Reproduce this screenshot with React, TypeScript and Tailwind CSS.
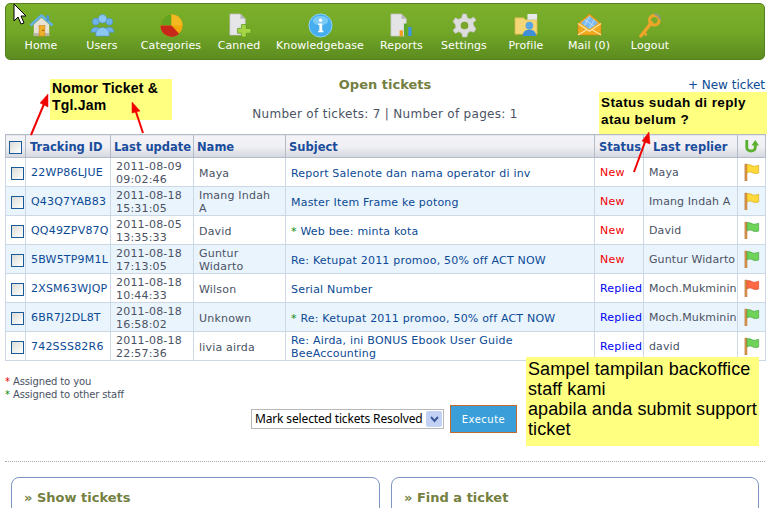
const navFont = { fontFamily: '"DejaVu Sans", sans-serif' };

function HomeIcon() {
  return (
    <svg width="25" height="25" viewBox="0 0 26 26">
      <path d="M5 12 L13 5 L21 12 V24 H5 Z" fill="#e8e2d6" />
      <path d="M5 24 H21 V21 H5 Z" fill="#b9b2a6" />
      <path d="M1.5 13 L13 2.5 L24.5 13" fill="none" stroke="#63b1e8" strokeWidth="2.6" strokeLinejoin="round" />
      <rect x="18" y="2.5" width="3" height="6" fill="#4d97d2" />
      <rect x="10.5" y="13" width="6" height="11" fill="#f0b12a" stroke="#c9821a" strokeWidth="0.6" />
      <circle cx="14.7" cy="18" r="0.9" fill="#9a5c10" />
    </svg>
  );
}

function UsersIcon() {
  return (
    <svg width="25" height="25" viewBox="0 0 26 26">
      <g fill="#6fb2ea" stroke="#4a90d0" strokeWidth="0.6">
        <circle cx="6" cy="9" r="3.6" />
        <circle cx="20" cy="9" r="3.6" />
        <path d="M1 20 C1 13 11 13 11 20 Z" />
        <path d="M15 20 C15 13 25 13 25 20 Z" />
        <circle cx="13" cy="6" r="4.4" fill="#8cc6f2" />
        <path d="M6 24 C5 12 21 12 20 24 Z" fill="#8cc6f2" />
      </g>
    </svg>
  );
}

function PieIcon() {
  return (
    <svg width="25" height="25" viewBox="0 0 26 26">
      <circle cx="13" cy="13" r="11.5" fill="#f0a80c" />
      <path d="M13 13 L13 1.5 A11.5 11.5 0 0 0 1.5 13 Z" fill="#63a51e" />
      <path d="M13 13 L1.5 13 A11.5 11.5 0 0 0 21 21.5 Z" fill="#c8281a" />
      <path d="M13 1.5 A11.5 11.5 0 0 1 24.5 13 L13 13 Z" fill="#f4b820" />
    </svg>
  );
}

function CannedIcon() {
  return (
    <svg width="25" height="25" viewBox="0 0 26 26">
      <path d="M3 1 H14 L19 6 V23 H3 Z" fill="#e6e6e8" stroke="#bdbdc2" strokeWidth="0.7" />
      <path d="M14 1 V6 H19 Z" fill="#b5b5ba" />
      <path d="M15 12 H20 V16 H25 V21 H20 V25 H15 V21 H11 V16 H15 Z" fill="#a5d544" stroke="#5e9a20" strokeWidth="0.8" />
    </svg>
  );
}

function InfoIcon() {
  return (
    <svg width="25" height="25" viewBox="0 0 26 26">
      <circle cx="13" cy="13" r="12" fill="#46aeef" stroke="#8fd2f8" strokeWidth="1" />
      <ellipse cx="13" cy="8" rx="8" ry="5" fill="#9ddcfb" opacity="0.6" />
      <circle cx="13" cy="7.5" r="1.8" fill="#fff" />
      <path d="M10.5 11 H14.8 V18.5 H16 V20 H10.5 V18.5 H11.8 V12.5 H10.5 Z" fill="#fff" />
    </svg>
  );
}

function ReportsIcon() {
  return (
    <svg width="25" height="25" viewBox="0 0 26 26">
      <path d="M2 1 H13 L18 6 V24 H2 Z" fill="#e4e4e6" stroke="#c0c0c4" strokeWidth="0.7" />
      <path d="M13 1 V6 H18 Z" fill="#b5b5ba" />
      <rect x="11" y="18" width="3.5" height="6" fill="#f0a020" />
      <rect x="15.5" y="11" width="3.5" height="13" fill="#58a82c" />
      <rect x="20" y="14.5" width="3.5" height="9.5" fill="#3d94e0" />
    </svg>
  );
}

function GearIcon() {
  return (
    <svg width="25" height="25" viewBox="0 0 26 26">
      <path
        d="M11 1 H15 L16 5 L19 6.3 L22.5 4.2 L25 7.5 L22 10.2 L22.6 13 L25 16.5 L22.8 20 L19 19 L16.5 21 L15.5 25 H11 L10 21 L7 19.5 L3.5 21.2 L1 18 L3.8 15 L3.4 12 L1 9 L3.4 5 L7 6.6 L10 5 Z"
        fill="#dcdcdc"
        stroke="#bdbdbd"
        strokeWidth="0.6"
      />
      <circle cx="13" cy="13" r="4" fill="#7ba52b" />
    </svg>
  );
}

function ProfileIcon() {
  return (
    <svg width="25" height="25" viewBox="0 0 26 26">
      <path d="M1 5 H10 L12 7 H24 V22 H1 Z" fill="#f3d675" stroke="#d8b24e" strokeWidth="0.7" />
      <path d="M14 1 H24 V7 H14 Z" fill="#e8e8e8" />
      <circle cx="16" cy="13" r="4" fill="#5aa5e3" />
      <path d="M9 24 C9 15 23 15 23 24 Z" fill="#3f8ed8" />
    </svg>
  );
}

function MailIcon() {
  return (
    <svg width="25" height="25" viewBox="0 0 26 26">
      <path d="M13 1 L25 11 V23 H1 V11 Z" fill="#f0a81e" stroke="#c87f10" strokeWidth="0.6" />
      <path d="M13 3 L22 10.5 L13 17 L4 10.5 Z" fill="#7ab9f0" />
      <path d="M8 7 L18 14 M13 3.5 L8 13 M18 7 L13 16" stroke="#c3e0f8" strokeWidth="1" />
      <path d="M1 11 L13 19 L25 11 M1 23 L11 17 M25 23 L15 17" fill="none" stroke="#ffe7a0" strokeWidth="1.2" />
    </svg>
  );
}

function KeyIcon() {
  return (
    <svg width="25" height="25" viewBox="0 0 26 26">
      <path d="M3 24 L14 10" stroke="#eea52a" strokeWidth="3.4" strokeLinecap="round" />
      <path d="M5.5 20 L9 23" stroke="#eea52a" strokeWidth="2.4" />
      <circle cx="17" cy="7.5" r="5" fill="none" stroke="#eea52a" strokeWidth="3.2" />
      <path d="M17 1 A7 7 0 0 1 23 7" fill="none" stroke="#8a9a80" strokeWidth="2" />
    </svg>
  );
}

const navItems = [
  { label: "Home", width: "w-[60px]", icon: <HomeIcon /> },
  { label: "Users", width: "w-[62px]", icon: <UsersIcon /> },
  { label: "Categories", width: "w-[76px]", icon: <PieIcon /> },
  { label: "Canned", width: "w-[60px]", icon: <CannedIcon /> },
  { label: "Knowledgebase", width: "w-[102px]", icon: <InfoIcon /> },
  { label: "Reports", width: "w-[61px]", icon: <ReportsIcon /> },
  { label: "Settings", width: "w-[64px]", icon: <GearIcon /> },
  { label: "Profile", width: "w-[60px]", icon: <ProfileIcon /> },
  { label: "Mail (0)", width: "w-[66px]", icon: <MailIcon /> },
  { label: "Logout", width: "w-[56px]", icon: <KeyIcon /> },
];

const tickets = [
  { id: "22WP86LJUE", date: "2011-08-09", time: "09:02:46", name: "Maya", subject: "Report Salenote dan nama operator di inv", star: false, status: "New", replier: "Maya", flag: "yellow" },
  { id: "Q43Q7YAB83", date: "2011-08-18", time: "15:31:05", name: "Imang Indah A", subject: "Master Item Frame ke potong", star: false, status: "New", replier: "Imang Indah A", flag: "yellow" },
  { id: "QQ49ZPV87Q", date: "2011-08-05", time: "13:35:33", name: "David", subject: "Web bee: minta kota", star: true, status: "New", replier: "David", flag: "green" },
  { id: "5BW5TP9M1L", date: "2011-08-18", time: "17:13:05", name: "Guntur Widarto", subject: "Re: Ketupat 2011 promoo, 50% off ACT NOW", star: false, status: "New", replier: "Guntur Widarto", flag: "green" },
  { id: "2XSM63WJQP", date: "2011-08-18", time: "10:44:33", name: "Wilson", subject: "Serial Number", star: false, status: "Replied", replier: "Moch.Mukminin", flag: "red" },
  { id: "6BR7J2DL8T", date: "2011-08-18", time: "16:58:02", name: "Unknown", subject: "Re: Ketupat 2011 promoo, 50% off ACT NOW", star: true, status: "Replied", replier: "Moch.Mukminin", flag: "green" },
  { id: "742SSS82R6", date: "2011-08-18", time: "22:57:36", name: "livia airda", subject: "Re: Airda, ini BONUS Ebook User Guide BeeAccounting", star: false, status: "Replied", replier: "david", flag: "green" },
];

const flagColors: Record<string, string[]> = {
  yellow: ["#ffd83a", "#d9a514"],
  green: ["#6fd35a", "#3d9f38"],
  red: ["#ff6a45", "#d9482a"],
};

function Flag({ color }: { color: string }) {
  const [fill, edge] = flagColors[color];
  return (
    <svg width="16" height="18" viewBox="0 0 18 20" className="block">
      <rect x="1" y="1" width="2.4" height="19" fill="#d8924a" stroke="#a8682c" strokeWidth="0.4" />
      <path d="M3.4 2 C7 0.5 9 4 12 3.5 C14 3.2 15.5 2.6 16.5 2.4 V11 C14 12 12 12 10 11 C8 10 6 9.4 3.4 11 Z" fill={fill} stroke={edge} strokeWidth="0.7" />
    </svg>
  );
}

function Checkbox({ className }: { className: string }) {
  return <input type="checkbox" className={`appearance-none block w-[13px] h-[13px] border border-[#1a5a9a] bg-gradient-to-br from-[#dcdcd6] to-white ${className}`} />;
}

function UpIcon() {
  return (
    <svg width="17" height="17" viewBox="0 0 18 18" className="block mx-auto">
      <path d="M4 2 V10 C4 15 13 15 13 10 V7" fill="none" stroke="#5cb030" strokeWidth="3" />
      <path d="M9 8 L13 2 L17 8 Z" fill="#5cb030" />
    </svg>
  );
}

const th = "h-[23px] pt-[4px] border border-[#b4bcc8] bg-gradient-to-b from-[#f4f4f8] via-[#f0f0f4] to-[#d6d8e0] text-left align-middle font-bold text-[11.5px] text-[#1a4c9c]";
const td = "h-[29px] border border-[#cdd8e6] align-middle overflow-hidden whitespace-nowrap";

export default function App() {
  return (
    <div className="relative w-[773px] h-[508px] overflow-hidden bg-white text-[11px] text-[#4a5264]" style={navFont}>
      <div className="pt-[3px] pl-[5px] w-[765px]">
        {/* top menu */}
        <div className="flex h-[57px] w-[760px] pl-[5px] rounded-[5px] border border-[#55801f] bg-gradient-to-b from-[#7db12b] via-[#72a727] to-[#5c8c20]">
          {navItems.map((item) => (
            <div key={item.label} className={`flex flex-col items-center pt-[9px] text-white tracking-[0.1px] ${item.width}`}>
              {item.icon}
              <span className="leading-[13px] mt-[1px]">{item.label}</span>
            </div>
          ))}
        </div>

        <div className="relative h-[74px]">
          <h1 className="pt-[17px] text-center text-[13px] leading-[16px] font-bold text-[#74803f]">Open tickets</h1>
          <a className="absolute right-0 top-[17px] text-[12px] leading-[16px] text-[#0b4a95]">+ New ticket</a>
          <p className="pt-[13px] text-center text-[12px] leading-[16px] text-[#4a5264] tracking-[0.3px]">Number of tickets: 7 | Number of pages: 1</p>
        </div>

        <table className="w-[760px] table-fixed border-collapse">
          <colgroup>
            <col className="w-[20px]" />
            <col className="w-[85px]" />
            <col className="w-[83px]" />
            <col className="w-[92px]" />
            <col className="w-[309px]" />
            <col className="w-[49px]" />
            <col className="w-[94px]" />
            <col className="w-[28px]" />
          </colgroup>
          <thead>
            <tr>
              <th className={`${th} !pt-[2px]`}><Checkbox className="ml-[3px]" /></th>
              <th className={`${th} pl-[4px]`}>Tracking ID</th>
              <th className={`${th} pl-[3px]`}>Last update</th>
              <th className={`${th} pl-[3px]`}>Name</th>
              <th className={`${th} pl-[3px]`}>Subject</th>
              <th className={`${th} pl-[4px]`}>Status</th>
              <th className={`${th} pl-[9px]`}>Last replier</th>
              <th className={`${th} !pt-[1px]`}><UpIcon /></th>
            </tr>
          </thead>
          <tbody>
            {tickets.map((t, i) => (
              <tr key={t.id} className={i % 2 === 1 ? "bg-[#eaf4fd]" : "bg-white"}>
                <td className={`${td} pt-[2px]`}><Checkbox className="ml-[5px]" /></td>
                <td className={`${td} pt-[3px] pl-[5px] text-[#0b4a95] tracking-[0.2px]`}>{t.id}</td>
                <td className={`${td} pt-[2px] pl-[5px] leading-[13px] tracking-[0.2px]`}>{t.date}<br />{t.time}</td>
                <td className={`${td} pl-[5px] pr-[8px] !whitespace-normal leading-[13px] tracking-[0.2px] ${t.name.length > 11 ? "pt-[2px]" : "pt-[3px]"}`}>{t.name}</td>
                <td className={`${td} pl-[5px] !whitespace-normal leading-[13px] text-[#0b4a95] tracking-[0.2px] ${t.subject.length > 45 ? "pt-[2px]" : "pt-[3px]"}`}>
                  {t.star && <span className="text-[#0a8a0a]">* </span>}
                  {t.subject}
                </td>
                <td className={`${td} pt-[3px] pl-[5px] tracking-[0.2px] ${t.status === "New" ? "text-[#f00000]" : "text-[#0000f0]"}`}>{t.status}</td>
                <td className={`${td} pt-[3px] pl-[5px] tracking-[0.1px]`}>{t.replier}</td>
                <td className={`${td} pl-[6px]`}><Flag color={t.flag} /></td>
              </tr>
            ))}
          </tbody>
        </table>

        <div className="pt-[14px] text-[10px] leading-[13px] tracking-[-0.12px]">
          <p><span className="text-[#e00000]">*</span> Assigned to you</p>
          <p><span className="text-[#0a8a0a]">*</span> Assigned to other staff</p>
        </div>

        <div className="flex items-center mt-[4px] ml-[246px] gap-[6px]">
          <div className="flex items-center h-[20px] w-[193px] border border-[#b8b8b8] pl-[3px] pr-[1px] justify-between">
            <select className="appearance-none w-[172px] bg-transparent text-[12px] text-black outline-none tracking-[-0.15px]" style={{ fontFamily: '"Noto Sans", sans-serif' }}>
              <option>Mark selected tickets Resolved</option>
            </select>
            <span className="flex items-center justify-center w-[16px] h-[16px] rounded-[2px] bg-[#c3d2f4]">
              <svg width="9" height="7" viewBox="0 0 9 7"><path d="M1 1 L4.5 5 L8 1" fill="none" stroke="#3a5a9a" strokeWidth="2" /></svg>
            </span>
          </div>
          <button className="w-[67px] h-[28px] bg-[#3a9fd8] border border-[#c06a30] text-[10px] text-white tracking-[0.5px]">Execute</button>
        </div>

        <div className="mt-[28px] border-t border-dotted border-[#a8a8a8]"></div>

        <div className="flex mt-[15px] ml-[6px] gap-[11px]">
          <div className="w-[369px] h-[60px] border border-[#7e95c4] rounded-t-[8px] pl-[12px] pt-[12px] text-[13px] leading-[16px] font-bold text-[#74803f]">» Show tickets</div>
          <div className="w-[368px] h-[60px] border border-[#7e95c4] rounded-t-[8px] pl-[12px] pt-[12px] text-[13px] leading-[16px] font-bold text-[#74803f]">» Find a ticket</div>
        </div>
      </div>

      {/* annotations pasted over the screenshot */}
      <div className="absolute left-[50px] top-[79px] w-[122px] h-[41px] bg-[#ffff80] pl-[2px] pt-[1px] text-[14px] leading-[17px] font-bold text-black tracking-[0.2px]" style={{ fontFamily: '"Liberation Sans", sans-serif' }}>
        Nomor Ticket &amp;<br />Tgl.Jam
      </div>
      <div className="absolute left-[599px] top-[92px] w-[168px] h-[42px] bg-[#ffff80] pl-[2px] pt-[2px] text-[13.5px] leading-[17px] font-bold text-black tracking-[0.4px]" style={{ fontFamily: '"Liberation Sans", sans-serif' }}>
        Status sudah di reply<br />atau belum ?
      </div>
      <div className="absolute left-[526px] top-[357px] w-[233px] h-[89px] bg-[#ffff80] pl-[2px] pt-[2px] text-[18px] leading-[20px] text-black tracking-[0.1px]" style={{ fontFamily: '"Liberation Sans", sans-serif' }}>
        Sampel tampilan backoffice<br />staff kami<br />apabila anda submit support<br />ticket
      </div>

      <svg className="absolute left-0 top-0 pointer-events-none" width="773" height="508" viewBox="0 0 773 508">
        <g stroke="#f00000" strokeWidth="2" fill="#f00000">
          <path d="M31 135 L44 104" />
          <path d="M48 94 L48 107 L40 103 Z" strokeWidth="0.5" />
          <path d="M143 133 L136 112" />
          <path d="M132 102 L140 111 L132 113 Z" strokeWidth="0.5" />
          <path d="M634 172 L645 142" />
          <path d="M649 132 L650 144 L642 141 Z" strokeWidth="0.5" />
        </g>
        <path d="M14 4 V21 L18 17 L21 24 L24 23 L21 16 L26 16 Z" fill="#fff" stroke="#000" strokeWidth="1" />
      </svg>
    </div>
  );
}
